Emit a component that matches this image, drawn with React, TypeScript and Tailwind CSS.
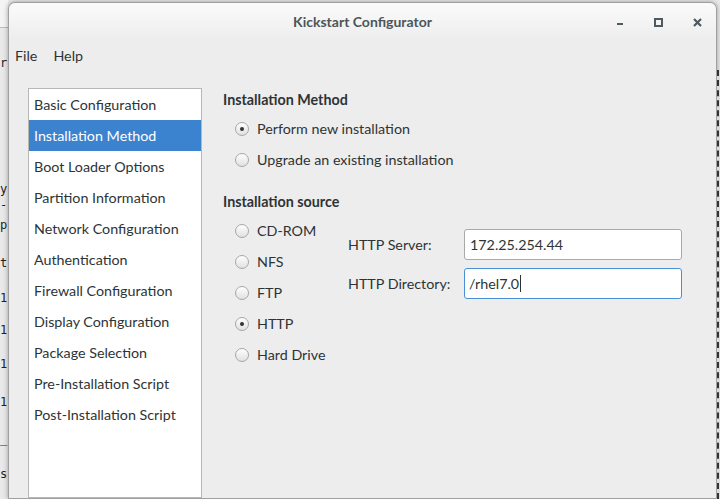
import React from "react";

const items = [
  "Basic Configuration",
  "Installation Method",
  "Boot Loader Options",
  "Partition Information",
  "Network Configuration",
  "Authentication",
  "Firewall Configuration",
  "Display Configuration",
  "Package Selection",
  "Pre-Installation Script",
  "Post-Installation Script",
];

const Radio = ({ checked }: { checked?: boolean }) => (
  <span className="w-[14px] h-[14px] rounded-full border border-[#a7a7a7] bg-linear-to-b from-[#fefefe] to-[#e1e1e1] flex items-center justify-center shrink-0">
    {checked && <span className="w-[4px] h-[4px] rounded-full bg-[#2e3436]" />}
  </span>
);

const RadioRow = ({ label, checked }: { label: string; checked?: boolean }) => (
  <div className="h-[31px] flex items-center gap-[8px] pl-[12px]">
    <Radio checked={checked} />
    <span>{label}</span>
  </div>
);

export default function App() {
  return (
    <div className="w-[720px] h-[499px] overflow-hidden flex bg-[#e9e9e9] text-[14.3px] text-[#2e3436] font-['Lato','Noto_Sans',sans-serif]">
      {/* terminal behind window */}
      <div className="w-[8px] shrink-0 overflow-hidden flex flex-col text-[12px] text-[#222] font-['DejaVu_Sans_Mono',monospace] leading-[16px]">
        <div className="h-[28px] bg-[#f4f4f4] border-b border-[#bdbdbd]" />
        <div className="h-[27px]" />
        <div>r</div>
        <div className="h-[110px]" />
        <div>y</div>
        <div className="h-[20px]">-</div>
        <div className="h-[38px]">p</div>
        <div className="h-[35px]">t</div>
        <div className="h-[32px]">1</div>
        <div className="h-[34px]">1</div>
        <div className="h-[38px]">1</div>
        <div className="h-[37px]">1</div>
        <div className="h-[35px]">_</div>
        <div>s</div>
      </div>

      {/* window */}
      <div className="w-[709px] shrink-0 mt-[2px] rounded-t-[7px] border border-[#a0a0a0] bg-[#ededed] flex flex-col shadow-[0_0_5px_rgba(0,0,0,0.35)]">
        <div className="h-[37px] shrink-0 rounded-t-[7px] bg-linear-to-b from-[#fbfbfb] to-[#ededed] relative flex items-center justify-center">
          <span className="font-bold text-[#4b565b] text-[14px]">Kickstart Configurator</span>
          <div className="absolute right-[14px] top-[15px] flex items-start gap-[30px]">
            <svg width="8" height="9" viewBox="0 0 8 9">
              <rect x="1" y="5" width="6" height="2" fill="#4d5a61" />
            </svg>
            <svg width="9" height="9" viewBox="0 0 9 9">
              <rect x="1" y="1" width="7" height="7" fill="none" stroke="#4d5a61" strokeWidth="2" />
            </svg>
            <svg width="9" height="9" viewBox="0 0 9 9">
              <path d="M1 1 L8 8 M8 1 L1 8" stroke="#4d5a61" strokeWidth="2.2" />
            </svg>
          </div>
        </div>

        <div className="h-[31px] shrink-0 flex items-center pl-[6px] gap-[16px]">
          <span>File</span>
          <span>Help</span>
        </div>

        <div className="flex-1 flex pl-[19px] pt-[17px] min-h-0">
          <div className="w-[174px] shrink-0 border border-[#b7b7b4] bg-white">
            {items.map((it) => (
              <div
                key={it}
                className={
                  it === "Installation Method"
                    ? "h-[31px] flex items-center pl-[5px] bg-[#3b82cf] text-white"
                    : "h-[31px] flex items-center pl-[5px]"
                }
              >
                {it}
              </div>
            ))}
          </div>

          <div className="ml-[21px] pt-[1px] flex flex-col">
            <div className="h-[22px] flex items-center font-bold">Installation Method</div>
            <div className="mt-[2px]">
              <RadioRow label="Perform new installation" checked />
              <RadioRow label="Upgrade an existing installation" />
            </div>
            <div className="h-[22px] mt-[16px] flex items-center font-bold">Installation source</div>
            <div className="mt-[2px] flex">
              <div className="w-[125px] shrink-0">
                <RadioRow label="CD-ROM" />
                <RadioRow label="NFS" />
                <RadioRow label="FTP" />
                <RadioRow label="HTTP" checked />
                <RadioRow label="Hard Drive" />
              </div>
              <div className="mt-[14px] flex flex-col gap-[8px]">
                <div className="flex items-center">
                  <span className="w-[116px]">HTTP Server:</span>
                  <div className="w-[218px] h-[31px] bg-white border border-[#a9a9a9] rounded-[3px] flex items-center pl-[5px]">
                    172.25.254.44
                  </div>
                </div>
                <div className="flex items-center">
                  <span className="w-[116px]">HTTP Directory:</span>
                  <div className="w-[218px] h-[31px] bg-white border border-[#4a90d9] rounded-[3px] flex items-center pl-[4px]">
                    /rhel7.0
                    <span className="w-[1px] h-[17px] bg-[#2e3436] ml-[1px]" />
                  </div>
                </div>
              </div>
            </div>
          </div>
        </div>
      </div>

      {/* background on right */}
      <div className="flex-1 border-l-2 border-dashed border-[#333] bg-[#dcdcdc] mt-[70px]" />
    </div>
  );
}
